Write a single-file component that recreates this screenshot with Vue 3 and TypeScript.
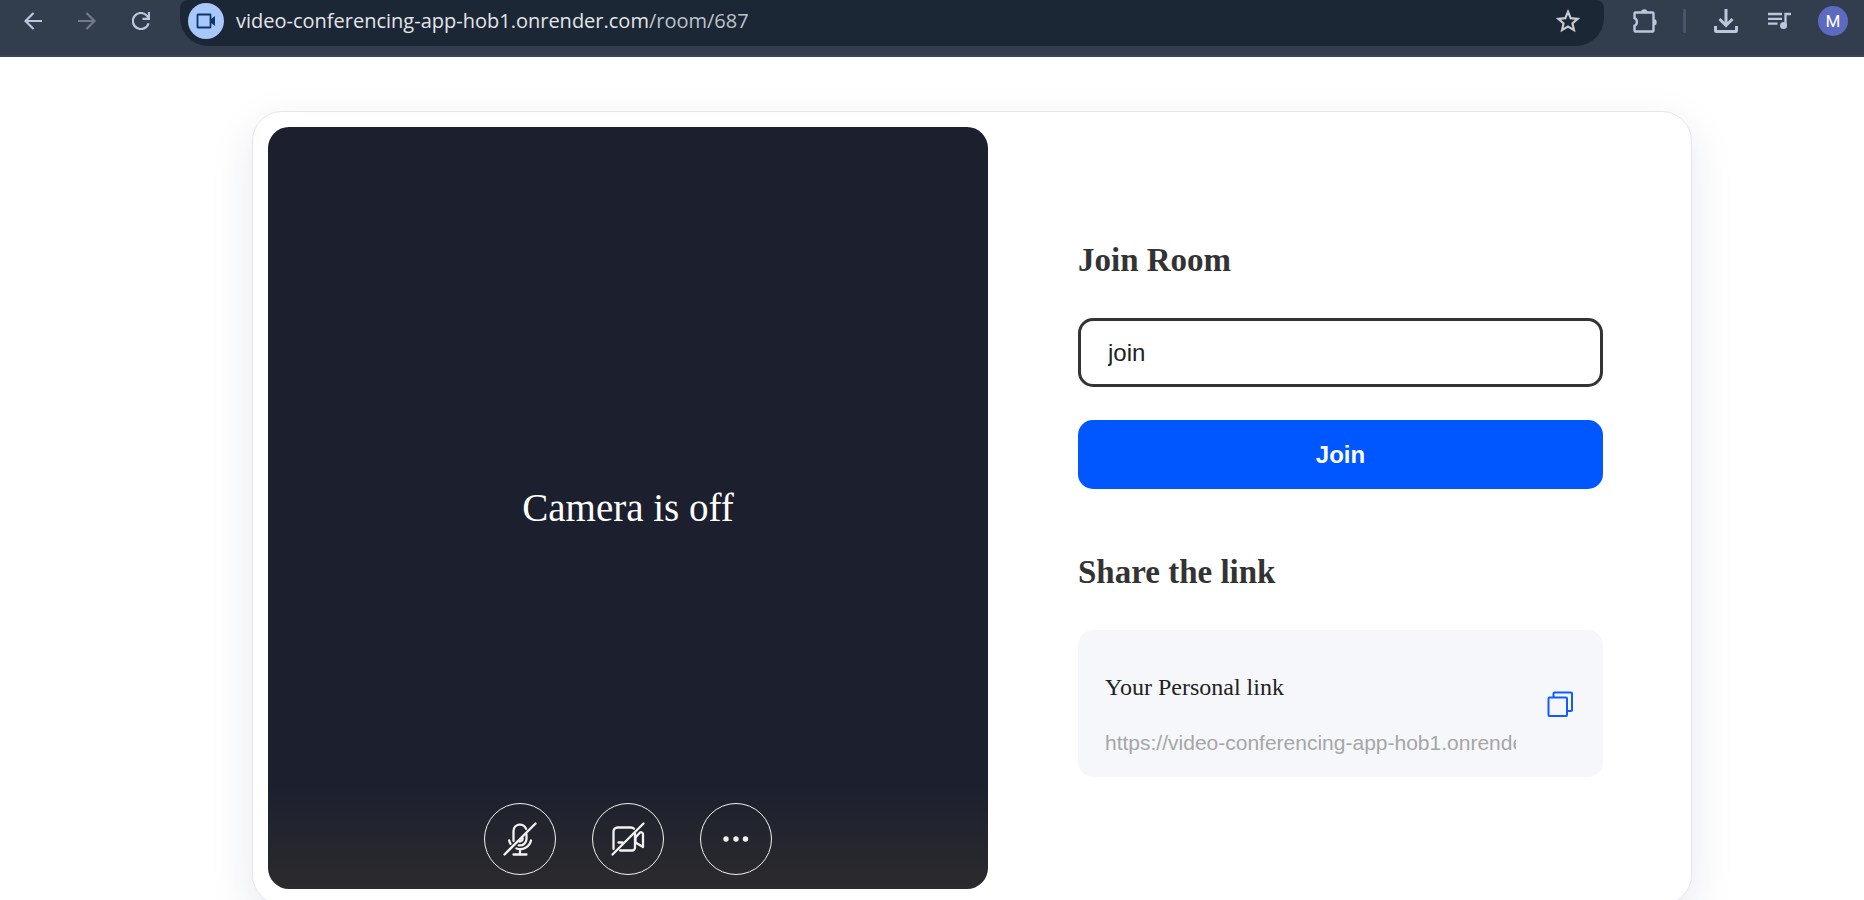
<script setup lang="ts">
import { ref } from 'vue'

const name = ref('join')
const shareLink = ref('https://video-conferencing-app-hob1.onrender.com/room/687')

async function copyLink(): Promise<void> {
  await navigator.clipboard?.writeText(shareLink.value)
}
</script>

<template>
  <div class="page">
    <header class="toolbar">
      <nav class="nav" aria-label="Browser navigation">
        <button type="button" class="tool" aria-label="Back">
          <svg width="18" height="18" viewBox="0 0 18 18" fill="none" stroke="#bcc7de" stroke-width="2.200">
            <path d="M18 9H2M9.500 1L1.500 9l8 8" />
          </svg>
        </button>
        <button type="button" class="tool" aria-label="Forward" disabled>
          <svg width="18" height="18" viewBox="0 0 18 18" fill="none" stroke="#727b8b" stroke-width="2.200">
            <path d="M0 9h16M8.500 1l8 8-8 8" />
          </svg>
        </button>
        <button type="button" class="tool" aria-label="Reload">
          <svg width="18" height="18" viewBox="0 0 18 18" fill="none" stroke="#bcc7de" stroke-width="2.200">
            <path d="M16.600 11.200A8 8 0 1 1 15.300 4.200L17 6.200M17 0v6.800h-6.500" />
          </svg>
        </button>
      </nav>
      <div class="address">
        <span class="site">
          <svg width="20" height="16" viewBox="0 0 20 16">
            <rect x="1.500" y="1.500" width="13" height="13" rx="0.500" fill="none" stroke="#0a3768" stroke-width="1.800" />
            <path d="M14.500 6.500L19 3v10l-4.500-3.500z" fill="#0a3768" />
          </svg>
        </span>
        <span class="url">video-conferencing-app-hob1.onrender.com<span class="path">/room/687</span></span>
        <button type="button" class="tool" aria-label="Bookmark">
          <svg width="26" height="26" viewBox="0 0 24 24" fill="none" stroke="#c9cace" stroke-width="2">
            <path d="M12 3.500l2.500 5.900 6.400.600-4.800 4.200 1.400 6.200-5.500-3.300-5.500 3.300 1.400-6.200L3.100 10l6.400-.600z" />
          </svg>
        </button>
      </div>
      <div class="actions">
        <button type="button" class="tool" aria-label="Extensions">
          <svg width="26" height="26" viewBox="0 0 26 26">
            <path d="M3.500 4.500h17a1 1 0 0 1 1 1v17a1 1 0 0 1-1 1h-17a1 1 0 0 1-1-1v-4.700a4.200 4.200 0 0 0 0-7.600V5.500a1 1 0 0 1 1-1z" fill="none" stroke="#bcc7de" stroke-width="2.400" />
            <path d="M9 4.500a3.200 3.200 0 0 1 6.400 0zM21.500 11a3.200 3.200 0 0 1 0 6.400z" fill="#bcc7de" />
          </svg>
        </button>
        <span class="divider"></span>
        <button type="button" class="tool" aria-label="Downloads">
          <svg width="24" height="24" viewBox="0 0 24 24" fill="none" stroke="#bcc7de" stroke-width="3">
            <path d="M12 0v16M5.500 10l6.500 6.500 6.500-6.500M1.500 17v4.500a1 1 0 0 0 1 1h19a1 1 0 0 0 1-1V17" />
          </svg>
        </button>
        <button type="button" class="tool" aria-label="Media controls">
          <svg width="24" height="18" viewBox="0 0 24 18">
            <path d="M0 2h14M0 6.800h14M0 11.600h9.500M17.500 14V2H23" fill="none" stroke="#bcc7de" stroke-width="2.300" />
            <circle cx="15.500" cy="13.500" r="3.500" fill="#bcc7de" />
          </svg>
        </button>
        <button type="button" class="avatar" aria-label="Profile">M</button>
      </div>
    </header>

    <main class="content">
      <div class="card">
        <section class="video">
          <p class="status">Camera is off</p>
          <div class="controls">
            <button type="button" class="round" aria-label="Unmute microphone">
              <svg width="36" height="36" viewBox="0 0 36 36" fill="none" stroke="#f2f2f2" stroke-width="2.300" stroke-linecap="round">
                <path d="M11.500 20V10a6.500 6.500 0 0 1 12.600-2.200M24.500 13.500V18a6.500 6.500 0 0 1-7.800 6.300M17.500 20.500a3 3 0 0 0 3.200-3" />
                <path d="M7.200 19.500a10.500 10.500 0 0 0 1.300 3.300M29 19.500a11 11 0 0 1-14.500 8M18 28.500V33M11.500 33.500h13" />
                <path d="M2.500 33.500L33.500 2.500" />
              </svg>
            </button>
            <button type="button" class="round" aria-label="Turn camera on">
              <svg width="36" height="36" viewBox="0 0 36 36" fill="none" stroke="#f2f2f2" stroke-width="2.300" stroke-linecap="round" stroke-linejoin="round">
                <path d="M3.500 28V10.500a4 4 0 0 1 4-4H21a4 4 0 0 1 3 1.200M25 12.500v14a3 3 0 0 1-3 3H10M8.500 21.500h4" />
                <path d="M25.500 16.500l4.500-5a2 2 0 0 1 3 1.500v13l-7.500-4.500z" />
                <path d="M2.500 33.500L33.500 2.500" />
              </svg>
            </button>
            <button type="button" class="round" aria-label="More options">
              <svg width="36" height="36" viewBox="0 0 36 36" fill="#f2f2f2">
                <circle cx="8" cy="18" r="2.700" /><circle cx="18" cy="18" r="2.700" /><circle cx="27.500" cy="18" r="2.700" />
              </svg>
            </button>
          </div>
        </section>

        <section class="panel">
          <form class="join" @submit.prevent>
            <h1 class="title"><label for="name">Join Room</label></h1>
            <input id="name" v-model="name" class="name" type="text" />
            <button type="submit" class="submit">Join</button>
          </form>
          <div class="share">
            <h2 class="title">Share the link</h2>
            <div class="link-box">
              <div class="link-text">
                <label for="link">Your Personal link</label>
                <input id="link" class="link" type="text" readonly :value="shareLink" />
              </div>
              <button type="button" class="copy" aria-label="Copy link" @click="copyLink">
                <svg width="26" height="26" viewBox="0 0 26 26" fill="none" stroke="#0f5cff" stroke-width="2" stroke-linejoin="round">
                  <rect x="1.500" y="6.500" width="18.500" height="18.500" rx="1" />
                  <path d="M6.500 6.500v-4a1 1 0 0 1 1-1H24a1 1 0 0 1 1 1V19a1 1 0 0 1-1 1h-4" />
                </svg>
              </button>
            </div>
          </div>
        </section>
      </div>
    </main>
  </div>
</template>

<style>
body {
  margin: 0;
  background: #fff;
}
</style>

<style scoped>
* {
  box-sizing: border-box;
}

button {
  display: flex;
  align-items: center;
  justify-content: center;
  padding: 0;
  border: 0;
  background: none;
  cursor: pointer;
}

.page {
  height: 100vh;
  overflow: hidden;
  font-family: "Liberation Serif", "Times New Roman", serif;
  color: #222;
}

.toolbar {
  display: flex;
  align-items: flex-start;
  height: 57px;
  padding: 0 16px 0 19px;
  border-bottom: 2px solid #3c464f;
  background: #323d4d;
}

.nav {
  display: flex;
  gap: 26px;
  padding: 7px 25px 0 0;
}

.tool {
  width: 28px;
  height: 28px;
}

.address {
  display: flex;
  flex: 1;
  align-items: center;
  height: 46px;
  padding: 0 22px 4px 8px;
  border-radius: 8px 8px 28px 28px;
  background: #1c2736;
}

.site {
  display: flex;
  align-items: center;
  justify-content: center;
  width: 36px;
  height: 36px;
  border-radius: 50%;
  background: #a8c7fa;
}

.url {
  flex: 1;
  margin-left: 12px;
  font-family: "Open Sans", "Noto Sans", sans-serif;
  font-size: 20px;
  line-height: 28px;
  white-space: nowrap;
  color: #e3e5e8;
}

.path {
  color: #bfc3c9;
}

.actions {
  display: flex;
  align-items: center;
  height: 42px;
  padding-left: 27px;
}

.divider {
  width: 3px;
  height: 24px;
  margin: 0 26px 0 24px;
  border-radius: 1px;
  background: #4a5567;
}

.actions .tool + .tool {
  margin-left: 26px;
}

.avatar {
  width: 30px;
  height: 30px;
  margin-left: 24px;
  border-radius: 50%;
  background: #5c6bc0;
  font-family: Roboto, sans-serif;
  font-size: 17px;
  color: #fff;
}

.content {
  padding: 54px 172px 0 252px;
}

.card {
  display: grid;
  grid-template-columns: 720fr 688fr;
  padding: 15px;
  border: 1px solid #e6e6ef;
  border-radius: 30px;
  background: #fff;
  box-shadow: 0 15px 45px rgba(30, 40, 90, 0.1);
}

.video {
  display: flex;
  flex-direction: column;
  height: 762px;
  border-radius: 21px;
  background: linear-gradient(#1c1f2e 86%, #2b2b2e);
}

.status {
  display: flex;
  flex: 1;
  align-items: center;
  justify-content: center;
  margin: 85px 0 0;
  font-size: 39px;
  line-height: 48px;
  color: #fff;
}

.controls {
  display: flex;
  justify-content: center;
  gap: 36px;
  padding-bottom: 14px;
}

.round {
  width: 72px;
  height: 72px;
  border: 1px solid #f2f2f2;
  border-radius: 50%;
}

.panel {
  padding: 111px 73px 0 90px;
}

.title {
  margin: 0 0 36px;
  font-size: 33px;
  line-height: 44px;
  font-weight: bold;
  color: #333;
}

.name,
.submit {
  width: 100%;
  height: 69px;
  border-radius: 15px;
  font-family: "Liberation Sans", Arial, sans-serif;
  font-size: 24px;
}

.name {
  padding: 0 27px;
  border: 3px solid #333;
  outline: none;
  background: #fff;
  color: #222;
}

.submit {
  margin-top: 33px;
  background: #0056ff;
  font-weight: bold;
  color: #fff;
}

.share {
  margin-top: 61px;
}

.link-box {
  display: flex;
  align-items: center;
  justify-content: space-between;
  height: 147px;
  padding: 0 30px 0 27px;
  border-radius: 15px;
  background: #f5f7fb;
}

.link-text {
  display: flex;
  flex-direction: column;
  width: 411px;
  padding-top: 23px;
  font-size: 24px;
  line-height: 28px;
}

.link {
  height: 28px;
  margin-top: 28px;
  padding: 0;
  border: 0;
  outline: none;
  background: transparent;
  font-family: "Liberation Sans", Arial, sans-serif;
  font-size: 21px;
  color: #a6a6a6;
}
</style>
